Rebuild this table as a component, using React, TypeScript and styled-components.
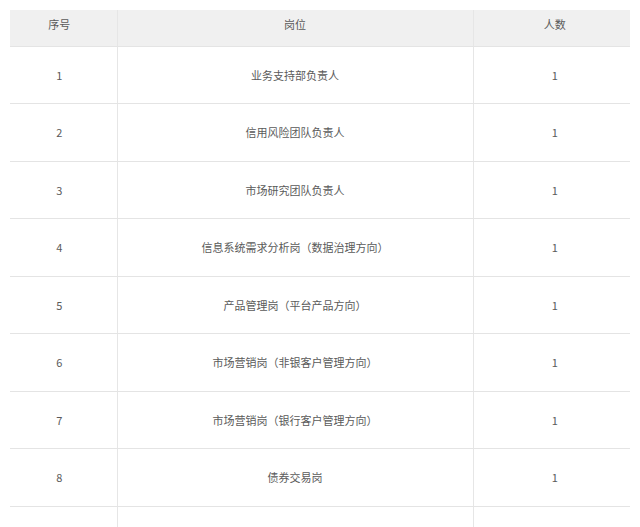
import React from "react";
import styled, { createGlobalStyle } from "styled-components";

const Global = createGlobalStyle`
  html, body { margin: 0; padding: 0; background: #fff; }
  body { font-family: "Noto Sans CJK SC", "Noto Sans", sans-serif; }
`;

const Page = styled.div`
  padding: 10px 10px 0 10px;
  height: 527px;
  box-sizing: border-box;
  overflow: hidden;
`;

const Table = styled.table`
  width: 620px;
  border-collapse: collapse;
  table-layout: fixed;
  font-size: 11px;
  color: #5a5a5a;
`;

const HeadCell = styled.th<{ $w: number; $shift?: number }>`
  width: ${(p) => p.$w}px;
  height: 36px;
  box-sizing: border-box;
  padding: 0 ${(p) => (p.$shift && p.$shift > 0 ? p.$shift * 2 : 0)}px 8px
    ${(p) => (p.$shift && p.$shift < 0 ? -p.$shift * 2 : 0)}px;
  background: #f0f0f0;
  font-weight: normal;
  text-align: center;
  border-left: 1px solid #e6e6e6;
  border-bottom: 1px solid #e4e4e4;
  &:first-child { border-left: none; }
`;

const Row = styled.tr<{ $h: number }>`
  height: ${(p) => p.$h}px;
`;

const Cell = styled.td<{ $shift?: number }>`
  padding: 0 ${(p) => (p.$shift && p.$shift > 0 ? p.$shift * 2 : 0)}px 0
    ${(p) => (p.$shift && p.$shift < 0 ? -p.$shift * 2 : 0)}px;
  text-align: center;
  vertical-align: middle;
  border-left: 1px solid #e6e6e6;
  border-bottom: 1px solid #e4e4e4;
  &:first-child { border-left: none; }
`;

const rows: [string, string, string][] = [
  ["1", "业务支持部负责人", "1"],
  ["2", "信用风险团队负责人", "1"],
  ["3", "市场研究团队负责人", "1"],
  ["4", "信息系统需求分析岗（数据治理方向）", "1"],
  ["5", "产品管理岗（平台产品方向）", "1"],
  ["6", "市场营销岗（非银客户管理方向）", "1"],
  ["7", "市场营销岗（银行客户管理方向）", "1"],
  ["8", "债券交易岗", "1"],
];

const heights = [57, 58, 57, 58, 57, 58, 57, 58];

export default function App() {
  return (
    <>
      <Global />
      <Page>
        <Table>
          <thead>
            <tr>
              <HeadCell $w={107} $shift={4}>序号</HeadCell>
              <HeadCell $w={356}>岗位</HeadCell>
              <HeadCell $w={157} $shift={-3}>人数</HeadCell>
            </tr>
          </thead>
          <tbody>
            {rows.map((r, i) => (
              <Row key={r[0]} $h={heights[i]}>
                <Cell $shift={4}>{r[0]}</Cell>
                <Cell>{r[1]}</Cell>
                <Cell $shift={-3}>{r[2]}</Cell>
              </Row>
            ))}
            <Row $h={57}>
              <Cell />
              <Cell />
              <Cell />
            </Row>
          </tbody>
        </Table>
      </Page>
    </>
  );
}
